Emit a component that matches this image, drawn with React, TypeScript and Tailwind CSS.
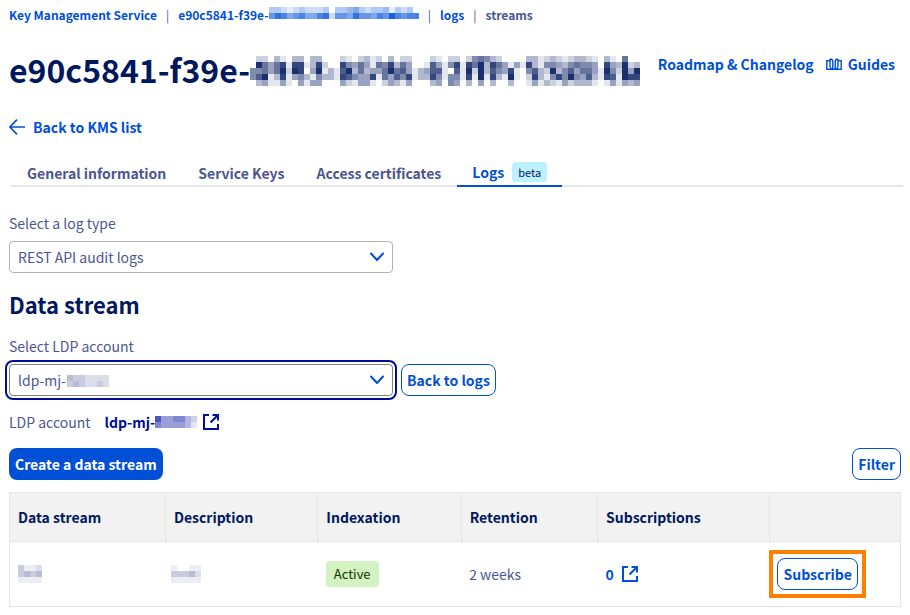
import React from "react";

type MosaicProps = { rows: string[]; color: string; cell?: number; className?: string };

/* Redacted text: every digit is the darkness of one square. */
function Mosaic({ rows, color, cell = 6, className = "" }: MosaicProps) {
  const cols = Math.max(...rows.map((r) => r.length));
  return (
    <svg
      width={cols * cell}
      height={rows.length * cell}
      viewBox={`0 0 ${cols} ${rows.length}`}
      shapeRendering="crispEdges"
      aria-hidden="true"
      className={`shrink-0 ${className}`}
    >
      {rows.flatMap((row, y) =>
        row.split("").map((d, x) =>
          d === "0" ? null : (
            <rect key={`${x}-${y}`} x={x} y={y} width={1} height={1} fill={color} fillOpacity={Number(d) / 10} />
          ),
        ),
      )}
    </svg>
  );
}

const TITLE_MOSAIC = [
  "02203103303300021023120302200021022025653200003312321233210310600",
  "09646818813820085464165836400174158186938641418315543565540843923",
  "55646929804913179363446967413477107192937548105732935746641952949",
  "57913814531533187544816475813385155181918319102831585954731871988",
  "03411410414400042144102431400034054030403003001413214233310141434",
];

function External() {
  return (
    <svg width="16" height="16" viewBox="0 0 16 16" fill="none" stroke="currentColor" strokeWidth="2" aria-hidden="true">
      <path d="M6 1H1v14h14v-5M9.5 1H15v5.5M15 1L7.5 8.5" />
    </svg>
  );
}

function Chevron() {
  return (
    <svg
      width="16"
      height="10"
      viewBox="0 0 16 10"
      fill="none"
      stroke="#0050d7"
      strokeWidth="2"
      strokeLinecap="round"
      strokeLinejoin="round"
      aria-hidden="true"
      className="pointer-events-none absolute top-[11px] right-2"
    >
      <path d="M2 1.5l6 6.5 6-6.5" />
    </svg>
  );
}

const outlineButton =
  "h-8 rounded-lg border border-[#0050d7] bg-white px-[5px] font-semibold whitespace-nowrap text-[#0050d7]";
const selectBox = "h-8 w-full appearance-none rounded-[4px] border bg-white px-2 text-[#4d5592]";
const tab = "px-4 pt-2 pb-[3px] whitespace-nowrap";
const th = "border border-[#e5e5e5] px-2 text-left font-semibold text-[#00185e]";

export default function App() {
  return (
    <main className="bg-white pl-[9px] font-['Noto_Sans_CJK_SC','Noto_Sans_CJK_JP',sans-serif] text-[14px] leading-5 text-[#4d5592]">
      <nav aria-label="Breadcrumb" className="flex h-[30px] items-center text-[12px] font-semibold text-[#0050d7]">
        <a href="#kms">Key Management Service</a>
        <span className="px-[9px] font-normal text-[#4d5592]">|</span>
        <a href="#key" className="flex items-center">
          e90c5841-f39e-
          <Mosaic
            color="#0050d7"
            className="mb-1"
            rows={["3321232223033453233413230", "6875675578266586657697677"]}
          />
        </a>
        <span className="px-[9px] font-normal text-[#4d5592]">|</span>
        <a href="#logs">logs</a>
        <span className="px-[9px] font-normal text-[#4d5592]">|</span>
        <span className="text-[#4d5592]">streams</span>
      </nav>

      <header className="mt-[17px] flex items-start justify-between pr-[15px]">
        <h1 className="flex items-center text-[32px] leading-11 font-bold text-[#00185e]">
          e90c5841-f39e-
          <Mosaic color="#00185e" rows={TITLE_MOSAIC} className="mt-1" />
        </h1>
        <div className="mt-[7px] flex items-center gap-3 font-semibold whitespace-nowrap text-[#0050d7]">
          <a href="#roadmap">Roadmap &amp; Changelog</a>
          <a href="#guides" className="flex items-center gap-[6px]">
            <svg width="16" height="14" viewBox="0 0 16 14" fill="none" stroke="currentColor" strokeWidth="1.4" aria-hidden="true">
              <path d="M3.5 3.7H.8v8.6h14.4V3.7h-2.7M4 2v7.5q.3 2 2.5 2.6M12 2v7.5q-.3 2-2.500 2.600M4 2q2.500.2 2.800 2.200v7.500M12 2q-2.500.2-2.800 2.200v7.500" />
            </svg>
            Guides
          </a>
        </div>
      </header>

      <a href="#list" className="mt-[26px] flex w-fit items-center gap-2 font-semibold text-[#0050d7]">
        <svg width="16" height="16" viewBox="0 0 16 16" fill="none" stroke="currentColor" strokeWidth="1.7" aria-hidden="true">
          <path d="M16 8H1M8 .7L.9 8 8 15.3" />
        </svg>
        Back to KMS list
      </a>

      <nav aria-label="Sections" className="mt-[18px] mr-[7px] ml-[2px] flex h-[32px] border-b-2 border-[#e5e5e5] font-semibold">
        <a href="#general" className={tab}>General information</a>
        <a href="#keys" className={tab}>Service Keys</a>
        <a href="#certificates" className={tab}>Access certificates</a>
        <a
          href="#logs-tab"
          aria-current="page"
          className="flex h-[32px] items-center gap-2 border-b-2 border-[#0050d7] px-[15px] pt-1 text-[#0050d7]"
        >
          Logs
          <span className="rounded-[4px] bg-[#bef1ff] px-[6px] text-[11px] leading-5 font-normal text-[#00185e]">beta</span>
        </a>
      </nav>

      <div className="mt-[26px] w-96">
        <label htmlFor="log-type" className="block">Select a log type</label>
        <div className="relative mt-2">
          <select id="log-type" className={`${selectBox} border-[#b3b3b3]`}>
            <option>REST API audit logs</option>
          </select>
          <Chevron />
        </div>
      </div>

      <h2 className="mt-[15px] text-[22px] leading-8 font-bold text-[#00185e]">Data stream</h2>

      <label htmlFor="ldp" className="mt-4 block">Select LDP account</label>
      <div className="mt-2 flex gap-2">
        <div className="relative w-96">
          <select
            id="ldp"
            className={`${selectBox} border-[#808080] outline-2 outline-offset-2 outline-[#000e9c]`}
          >
            <option>ldp-mj-</option>
          </select>
          <Mosaic color="#4d5592" rows={["4332222", "3432232"]} className="absolute top-[11px] left-[58px]" />
          <Chevron />
        </div>
        <button type="button" className={outlineButton}>Back to logs</button>
      </div>

      <div className="mt-4 flex items-center">
        <span>LDP account</span>
        <a href="#ldp-account" className="ml-[14px] flex items-center font-semibold text-[#000e9c]">
          ldp-mj-
          <Mosaic color="#000e9c" rows={["7445532", "5444431"]} />
          <span className="ml-[6px]"><External /></span>
        </a>
      </div>

      <div className="mt-4 flex justify-between pr-[9px]">
        <button type="button" className="h-8 rounded-lg bg-[#0050d7] px-[6px] font-semibold text-white">
          Create a data stream
        </button>
        <button type="button" className={outlineButton}>Filter</button>
      </div>

      <div className="mt-3 pr-[9px]">
        <table className="w-full table-fixed border-collapse">
          <thead>
            <tr className="h-[49px] bg-[#f2f2f2]">
              <th className={`${th} w-[17.5%]`}>Data stream</th>
              <th className={`${th} w-[17.1%]`}>Description</th>
              <th className={`${th} w-[16.1%]`}>Indexation</th>
              <th className={`${th} w-[15.3%]`}>Retention</th>
              <th className={`${th} w-[19.3%]`}>Subscriptions</th>
              <th className={th} aria-label="Actions" />
            </tr>
          </thead>
          <tbody>
            <tr className="h-[65px] border border-[#e5e5e5]">
              <td className="px-2">
                <Mosaic color="#4d5592" rows={["31120", "34340", "11110"]} />
              </td>
              <td className="px-[6px]">
                <Mosaic color="#4d5592" rows={["10011", "33342", "11111"]} />
              </td>
              <td className="px-2">
                <span className="inline-block rounded-[4px] bg-[#d2f2c2] px-2 text-[13px] leading-[26px] text-[#113300]">Active</span>
              </td>
              <td className="px-2">2 weeks</td>
              <td className="px-2">
                <a href="#subscriptions" className="flex items-center gap-2 font-semibold text-[#0050d7]">
                  0 <External />
                </a>
              </td>
              <td>
                <div className="w-fit border-4 border-[#ff8000] p-1">
                  <button type="button" className={`${outlineButton} block`}>Subscribe</button>
                </div>
              </td>
            </tr>
          </tbody>
        </table>
      </div>
    </main>
  );
}
